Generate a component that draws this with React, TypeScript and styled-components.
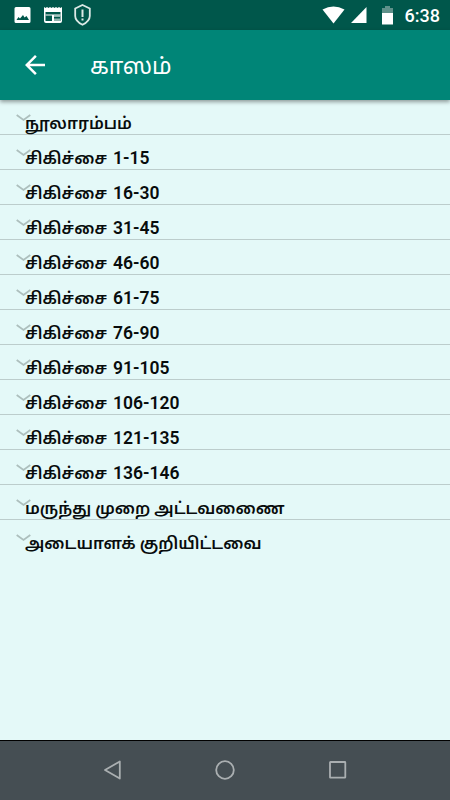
import React from 'react';
import styled, { createGlobalStyle } from 'styled-components';

const GlobalStyle = createGlobalStyle`
  * { box-sizing: border-box; }
  body { margin: 0; background: #e4f9f8; }
`;

const Screen = styled.div`
  display: flex;
  flex-direction: column;
  width: 450px;
  height: 800px;
  overflow: hidden;
  background: #e4f9f8;
  font-family: Roboto, 'Noto Sans Tamil', 'Noto Sans', sans-serif;
`;

const StatusBar = styled.header`
  display: flex;
  flex: 0 0 30px;
  align-items: center;
  justify-content: space-between;
  padding: 0 10px 0 13px;
  background: #00574b;
  color: #fff;
`;

const StatusGroup = styled.div<{ $gap: number }>`
  display: flex;
  align-items: center;
  gap: ${({ $gap }) => $gap}px;
`;

const Clock = styled.time`
  margin-left: 6px;
  padding-top: 2px;
  font-size: 18px;
  font-weight: 500;
  line-height: 28px;
`;

const Toolbar = styled.nav`
  display: flex;
  flex: 0 0 70px;
  align-items: center;
  padding-left: 20px;
  z-index: 1;
  background: #008577;
  color: #fff;
  box-shadow: 0 2px 4px rgba(0, 0, 0, 0.38);
`;

const BackButton = styled.button`
  display: flex;
  width: 30px;
  height: 30px;
  padding: 0;
  border: 0;
  background: none;
  color: inherit;
`;

const Title = styled.h1`
  margin: 0 0 0 40px;
  padding-top: 3px;
  font-size: 22.8px;
  font-weight: 400;
  line-height: 30px;
`;

const List = styled.ul`
  flex: 1;
  margin: 0;
  padding: 0;
  list-style: none;
`;

const Row = styled.li`
  display: flex;
  height: 35px;
  padding-left: 16px;
  border-bottom: 1px solid #bccdcc;
  color: #080c0c;

  &:last-child { border-bottom: 0; }
`;

const Chevron = styled.svg`
  flex: none;
  width: 15px;
  height: 8px;
  margin: 14px -6px 0 0;
`;

const Label = styled.span`
  font-size: 16.35px;
  font-weight: 600;
  line-height: 35px;
  padding-top: 6px;
  white-space: pre;
`;

const Range = styled.span`
  margin-left: 1.5px;
  font-family: Roboto, sans-serif;
  font-size: 17.5px;
  font-weight: 600;
`;

const NavBar = styled.footer`
  display: grid;
  grid-template-columns: repeat(3, 112.5px);
  flex: 0 0 60px;
  justify-content: center;
  place-items: center;
  padding-bottom: 1px;
  border-top: 1px solid #000;
  background: #454e53;
`;

const treatment = 'சிகிச்சை';
const items = [
  { label: 'நூலாரம்பம்' },
  ...['1-15', '16-30', '31-45', '46-60', '61-75', '76-90', '91-105', '106-120', '121-135', '136-146']
    .map((range) => ({ label: treatment, range })),
  { label: 'மருந்து முறை அட்டவணைை' },
  { label: 'அடையாளக் குறியிட்டவை' },
] as { label: string; range?: string }[];

function PictureIcon() {
  return <svg width="20" height="20" viewBox="0 0 20 20"><path fill="#fff" fillRule="evenodd" d="M3 2h13q1.500 0 1.500 1.500v13q0 1.500-1.500 1.500H3q-1.500 0-1.500-1.500v-13Q1.500 2 3 2Zm.5 13h12.500l-2.500-4-2 1.500-1.500-2.500-3 3.500-1.500-1.500Z" /></svg>;
}

function NewsIcon() {
  return (
    <svg width="20" height="20" viewBox="0 0 20 20">
      <path fill="#fff" fillRule="evenodd" d="M1 2l1.500 1L4 2l1.500 1L7 2l1.500 1L10 2l1.500 1L13 2l1.500 1L16 2l1.500 1L19 2v14q0 2-2 2H3q-2 0-2-2ZM2.500 7v9h15V7Z" />
      <path fill="#8fb4ae" d="M11 10.500h6.500V12H11ZM11 13.500h6.500V16H11Z" />
      <path fill="#fff" d="M2.500 9.500h15v1h-15ZM9 9.500h2V16H9Z" />
    </svg>
  );
}

function ShieldIcon() {
  return (
    <svg width="20" height="24" viewBox="0 0 20 24" fill="none" stroke="#dce9e6" strokeWidth="1.800">
      <path d="M9.500 2 16.800 5.500V13c0 3.500-2.800 6.500-7.300 8.800C5 19.500 2.200 16.500 2.200 13V5.500Z" />
      <path d="M9.500 6.500v7.500M9.500 15.500v2" strokeWidth="2" />
    </svg>
  );
}

function App() {
  return (
    <Screen>
      <GlobalStyle />
      <StatusBar>
        <StatusGroup $gap={10}>
          <PictureIcon />
          <NewsIcon />
          <ShieldIcon />
        </StatusGroup>
        <StatusGroup $gap={6}>
          <svg width="23" height="18" viewBox="0 0 23 18"><path fill="#fff" d="M.5 3.500Q11.500-2.500 22.500 3.500L11.500 17.500Z" /></svg>
          <svg width="16" height="16" viewBox="0 0 16 16"><path fill="#fff" d="M15.500 0V16H0Z" /></svg>
          <svg width="20" height="19" viewBox="0 0 20 19">
            <path fill="#5f918a" d="M12 0h5v2h3v5H9V2h3Z" />
            <path fill="#fff" d="M9 7h11v11.500H9Z" />
          </svg>
          <Clock>6:38</Clock>
        </StatusGroup>
      </StatusBar>
      <Toolbar>
        <BackButton aria-label="Back">
          <svg width="30" height="30" viewBox="0 0 24 24"><path fill="currentColor" d="M20 11H7.830l5.590-5.590L12 4l-8 8 8 8 1.410-1.410L7.830 13H20Z" /></svg>
        </BackButton>
        <Title>காஸம்</Title>
      </Toolbar>
      <List>
        {items.map(({ label, range }) => (
          <Row key={label + (range ?? '')}>
            <Chevron viewBox="0 0 15 8"><path d="M.7 1 7.500 6 14.300 1" fill="none" stroke="#adbfbd" strokeWidth="1.800" /></Chevron>
            <Label>{label}{range && <Range> {range}</Range>}</Label>
          </Row>
        ))}
      </List>
      <NavBar>
        <svg width="20" height="20" viewBox="0 0 20 20"><path d="M16.800 1.500V18.500L2 10Z" fill="none" stroke="#aaafb1" strokeWidth="1.800" strokeLinejoin="round" /></svg>
        <svg width="20" height="20" viewBox="0 0 20 20"><circle cx="10" cy="10" r="8.800" fill="none" stroke="#aaafb1" strokeWidth="1.800" /></svg>
        <svg width="20" height="20" viewBox="0 0 20 20"><rect x="2" y="2" width="15.300" height="15.700" rx=".5" fill="none" stroke="#aaafb1" strokeWidth="1.800" /></svg>
      </NavBar>
    </Screen>
  );
}

export default App;
